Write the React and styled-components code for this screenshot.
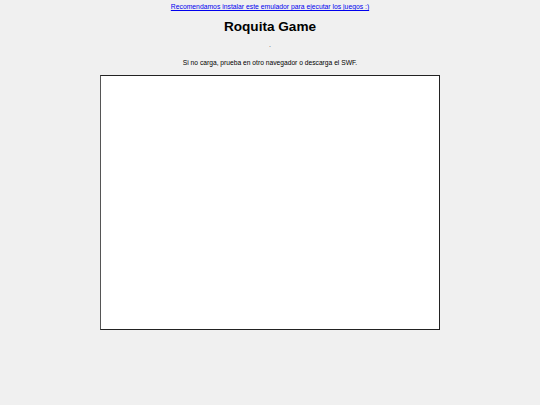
import React from "react";
import styled, { createGlobalStyle } from "styled-components";

const GlobalStyle = createGlobalStyle`
  html, body {
    margin: 0;
    padding: 0;
    background: #f0f0f0;
    font-family: "Liberation Sans", Arial, sans-serif;
  }
`;

const Page = styled.div`
  display: flex;
  flex-direction: column;
  align-items: center;
  width: 540px;
  height: 405px;
  background: #f0f0f0;
  color: #000;
`;

const Notice = styled.a`
  margin-top: 2px;
  font-size: 6.8px;
  line-height: 9px;
  color: #0000ee;
  text-decoration: underline;
`;

const Title = styled.h1`
  margin: 8px 0 0;
  font-size: 13.6px;
  line-height: 16px;
  font-weight: bold;
`;

const Dot = styled.div`
  margin-top: 6px;
  font-size: 7px;
  line-height: 8px;
  color: #555;
`;

const Hint = styled.p`
  margin: 9px 0 0;
  font-size: 6.7px;
  line-height: 9px;
`;

const Player = styled.div`
  margin-top: 8px;
  width: 338px;
  height: 253px;
  background: #fff;
  border: 1px solid #222;
  border-left-color: #555;
`;

export default function App() {
  return (
    <>
      <GlobalStyle />
      <Page>
        <Notice href="#">Recomendamos instalar este emulador para ejecutar los juegos :)</Notice>
        <Title>Roquita Game</Title>
        <Dot>.</Dot>
        <Hint>Si no carga, prueba en otro navegador o descarga el SWF.</Hint>
        <Player />
      </Page>
    </>
  );
}
